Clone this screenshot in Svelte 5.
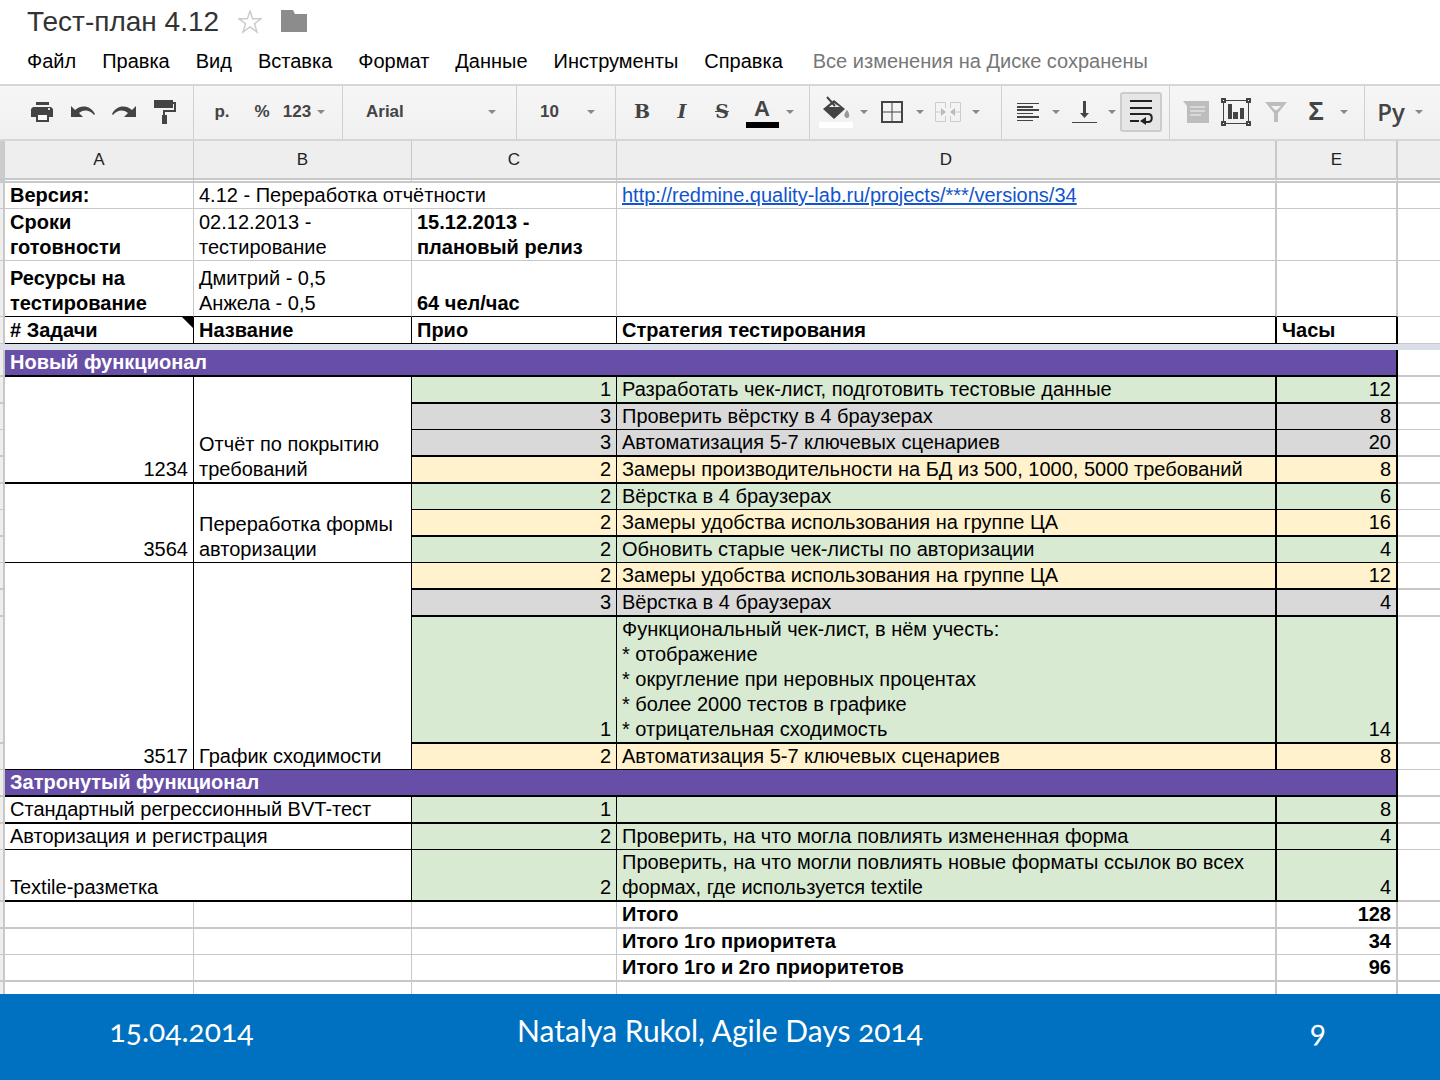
<script lang="ts">
type Tone = 'green' | 'grey' | 'yellow';

type Check = {
  prio: number;
  text: string;
  hours: number;
  tone: Tone;
  thin?: boolean;
};

type Task = { id: number; name: string; checks: Check[] };

const menus = ['Файл', 'Правка', 'Вид', 'Вставка', 'Формат', 'Данные', 'Инструменты', 'Справка'];

const tasks: Task[] = [
  {
    id: 1234,
    name: 'Отчёт по покрытию требований',
    checks: [
      { prio: 1, text: 'Разработать чек-лист, подготовить тестовые данные', hours: 12, tone: 'green' },
      { prio: 3, text: 'Проверить вёрстку в 4 браузерах', hours: 8, tone: 'grey', thin: true },
      { prio: 3, text: 'Автоматизация 5-7 ключевых сценариев', hours: 20, tone: 'grey' },
      { prio: 2, text: 'Замеры производительности на БД из 500, 1000, 5000 требований', hours: 8, tone: 'yellow' },
    ],
  },
  {
    id: 3564,
    name: 'Переработка формы авторизации',
    checks: [
      { prio: 2, text: 'Вёрстка в 4 браузерах', hours: 6, tone: 'green', thin: true },
      { prio: 2, text: 'Замеры удобства использования на группе ЦА', hours: 16, tone: 'yellow' },
      { prio: 2, text: 'Обновить старые чек-листы по авторизации', hours: 4, tone: 'green', thin: true },
    ],
  },
  {
    id: 3517,
    name: 'График сходимости',
    checks: [
      { prio: 2, text: 'Замеры удобства использования на группе ЦА', hours: 12, tone: 'yellow' },
      { prio: 3, text: 'Вёрстка в 4 браузерах', hours: 4, tone: 'grey' },
      {
        prio: 1,
        text: 'Функциональный чек-лист, в нём учесть:\n* отображение\n* округление при неровных процентах\n* более 2000 тестов в графике\n* отрицательная сходимость',
        hours: 14,
        tone: 'green',
      },
      { prio: 2, text: 'Автоматизация 5-7 ключевых сценариев', hours: 8, tone: 'yellow', thin: true },
    ],
  },
];

const affected = [
  { name: 'Стандартный регрессионный BVT-тест', prio: 1, text: '', hours: 8, thin: false },
  { name: 'Авторизация и регистрация', prio: 2, text: 'Проверить, на что могла повлиять измененная форма', hours: 4, thin: true },
  { name: 'Textile-разметка', prio: 2, text: 'Проверить, на что могли повлиять новые форматы ссылок во всех формах, где используется textile', hours: 4, thin: false },
];

const totals = [
  { label: 'Итого', value: 128, thin: false },
  { label: 'Итого 1го приоритета', value: 34, thin: true },
  { label: 'Итого 1го и 2го приоритетов', value: 96, thin: false },
];

let font = $state('Arial');
let size = $state('10');
let wrap = $state(true);
</script>

{#snippet arrow()}
  <svg class="arrow" width="8" height="4" viewBox="0 0 10 5" aria-hidden="true"><path d="M0 0h10L5 5z" /></svg>
{/snippet}

{#snippet drop(label: string)}
  <button class="drop" aria-label={label}>{@render arrow()}</button>
{/snippet}

<div class="page">
  <header>
    <div class="title">
      <h1>Тест-план 4.12</h1>
      <button class="plain" aria-label="Пометить">
        <svg width="24" height="24" viewBox="0 0 24 24" fill="none" stroke="#ccc" stroke-width="1.5">
          <path d="M12 1l2.600 7.700H23l-6.500 5L19 22l-7-5-7 5 2.500-8.300L1 8.700h8.400z" />
        </svg>
      </button>
      <button class="plain" aria-label="Папка">
        <svg width="26" height="24" viewBox="0 0 26 24" fill="#8c8c8c"><path d="M0 0h12l2 4h12v18H0z" /></svg>
      </button>
    </div>
    <nav>
      {#each menus as menu}
        <button class="plain">{menu}</button>
      {/each}
      <span class="saved">Все изменения на Диске сохранены</span>
    </nav>
  </header>

  <div class="toolbar" role="toolbar" aria-label="Панель инструментов">
    <div class="group history">
      <button class="tool" aria-label="Печать">
        <svg width="24" height="24" viewBox="0 0 24 24">
          <path d="M6 2h13v3H6zM3 7h18l2 2v8h-4v-4H6v4H1V9z" />
          <path d="M7 14h11v7H7z" fill="#fafafa" stroke="#444" stroke-width="2" />
          <path d="M18 8h2v2h-2z" fill="#ddd" />
        </svg>
      </button>
      <button class="tool" aria-label="Отменить">
        <svg width="24" height="24" viewBox="0 0 24 24"><path d="M0 6v11h12l-4-4c5-4 11-3 15 2l1-1C20 6 11 4 4 10z" /></svg>
      </button>
      <button class="tool" aria-label="Повторить">
        <svg width="24" height="24" viewBox="0 0 24 24"><path d="M24 6v11H12l4-4c-5-4-11-3-15 2l-1-1C4 6 13 4 20 10z" /></svg>
      </button>
      <button class="tool" aria-label="Копировать форматирование">
        <svg width="24" height="26" viewBox="0 0 24 26">
          <path d="M1 1h19v8H1zM9 16h5v9H9z" />
          <path d="M20 4h2v8H11v4" fill="none" stroke="#444" stroke-width="2" />
        </svg>
      </button>
    </div>

    <div class="group number">
      <button class="tool">р.</button>
      <button class="tool">%</button>
      <button class="tool format">123 {@render arrow()}</button>
    </div>

    <div class="group field">
      <select aria-label="Шрифт" bind:value={font}>
        <option>Arial</option>
        <option>Verdana</option>
      </select>
      {@render arrow()}
    </div>

    <div class="group field">
      <select aria-label="Размер шрифта" bind:value={size}>
        <option>10</option>
        <option>12</option>
      </select>
      {@render arrow()}
    </div>

    <div class="group">
      <button class="tool serif" aria-label="Полужирный">B</button>
      <button class="tool serif italic" aria-label="Курсив">I</button>
      <button class="tool serif strike" aria-label="Зачеркнутый">S</button>
      <button class="tool color" aria-label="Цвет текста">A</button>
      {@render drop('Выбрать цвет текста')}
    </div>

    <div class="group">
      <button class="tool" aria-label="Цвет заливки">
        <svg width="34" height="32" viewBox="0 0 34 32">
          <path d="M0 26h34v6H0z" fill="#fff" />
          <path d="M4 13L15 4l11 9-11 10z" />
          <path d="M10 11l5-4 6 4z" fill="#f4f4f4" />
          <path d="M8 1l8 9" stroke="#444" stroke-width="2" />
          <path d="M28 14c3 4 3 8 0 8s-4-4 0-8z" fill="#999" />
        </svg>
      </button>
      {@render drop('Выбрать цвет заливки')}
      <button class="tool" aria-label="Границы">
        <svg width="22" height="22" viewBox="0 0 22 22" fill="none" stroke="#444">
          <path d="M1 1h20v20H1z" stroke-width="2" />
          <path d="M11 1v20M1 11h20" />
        </svg>
      </button>
      {@render drop('Стиль границ')}
      <button class="tool" aria-label="Объединить ячейки" disabled>
        <svg width="28" height="22" viewBox="0 0 28 22" fill="none" stroke="#ccc" stroke-width="1">
          <path d="M11.500 7V1.500h-10v19h10V15M16.500 7V1.500h10v19h-10V15M2 11h8M26 11h-8" />
          <path d="M7 7l5 4-5 4zM21 7l-5 4 5 4z" fill="#bbb" stroke="none" />
        </svg>
      </button>
      {@render drop('Варианты объединения')}
    </div>

    <div class="group">
      <button class="tool" aria-label="Выравнивание по горизонтали">
        <svg width="22" height="20" viewBox="0 0 22 20">
          <path d="M0 1h22v1H0zM0 4h16v2H0zM0 7h22v2H0zM0 11h16v1H0zM0 14h22v2H0zM0 18h16v1H0z" />
        </svg>
      </button>
      {@render drop('Варианты выравнивания')}
      <button class="tool" aria-label="Выравнивание по вертикали">
        <svg width="25" height="24" viewBox="0 0 25 24">
          <path d="M11 1h3v12h3l-4.500 5L8 13h3zM0 22h25v1H0z" />
        </svg>
      </button>
      {@render drop('Варианты вертикального выравнивания')}
      <button class="tool" class:on={wrap} aria-pressed={wrap} aria-label="Перенос текста" onclick={() => (wrap = !wrap)}>
        <svg width="24" height="26" viewBox="0 0 24 26" fill="none" stroke="#222" stroke-width="2">
          <path d="M1 2h22M1 9h22M1 15h18c5 0 5 8 0 8h-4M1 22h9" />
          <path d="M17 18v8l-6-4z" fill="#222" stroke="none" />
        </svg>
      </button>
    </div>

    <div class="group">
      <button class="tool" aria-label="Комментарий" disabled>
        <svg width="26" height="24" viewBox="0 0 26 24">
          <path d="M0 1h26v22H4V6z" fill="#bdbdbd" />
          <path d="M7 7h15M7 11h15M7 15h11" stroke="#f4f4f4" stroke-width="1" />
        </svg>
      </button>
      <button class="tool" aria-label="Диаграмма">
        <svg width="30" height="28" viewBox="0 0 30 28">
          <path d="M2.500 2.500h25v23h-25z" fill="none" stroke="#444" />
          <path d="M7 6h4v15H7zM12 14h5v7h-5zM19 10h4v11h-4z" />
          <path d="M1 1h3v3H1zM26 1h3v3h-3zM1 24h3v3H1zM26 24h3v3h-3z" fill="#fff" stroke="#444" stroke-width="2" />
        </svg>
      </button>
      <button class="tool" aria-label="Фильтр">
        <svg width="22" height="20" viewBox="0 0 22 20" fill="#bdbdbd">
          <path d="M0 0h22l-9 11v9H9v-9z" />
          <path d="M6 4h10l-4 4h-2z" fill="#f4f4f4" />
        </svg>
      </button>
      <button class="tool sigma" aria-label="Функции">Σ</button>
      {@render drop('Список функций')}
    </div>

    <div class="group">
      <button class="tool lang" aria-label="Способ ввода">Ру</button>
      {@render drop('Выбрать способ ввода')}
    </div>
  </div>

  <table>
    <colgroup>
      <col class="col-head" />
      <col class="col-a" />
      <col class="col-b" />
      <col class="col-c" />
      <col />
      <col class="col-e" />
      <col class="col-f" />
    </colgroup>
    <thead>
      <tr>
        <td class="corner"></td>
        {#each ['A', 'B', 'C', 'D', 'E', ''] as letter}
          <th scope="col" class:wide={letter === 'D' || letter === 'E'}>{letter}</th>
        {/each}
      </tr>
    </thead>
    <tbody>
      <tr class="thin bold">
        <td></td>
        <td>Версия:</td>
        <td class="normal" colspan="2">4.12 - Переработка отчётности</td>
        <td class="normal wide">
          <a href="http://redmine.quality-lab.ru/projects/***/versions/34">http://redmine.quality-lab.ru/projects/***/versions/34</a>
        </td>
        <td class="wide"></td>
        <td></td>
      </tr>
      <tr class="thin bold dates">
        <td></td>
        <td>{'Сроки\nготовности'}</td>
        <td class="normal">02.12.2013 - тестирование</td>
        <td>15.12.2013 - плановый релиз</td>
        <td class="wide"></td>
        <td class="wide"></td>
        <td></td>
      </tr>
      <tr class="thin bold staff">
        <td></td>
        <td class="under">Ресурсы на тестирование</td>
        <td class="normal under">{'Дмитрий - 0,5\nАнжела - 0,5'}</td>
        <td class="under">64 чел/час</td>
        <td class="under wide"></td>
        <td class="under wide"></td>
        <td></td>
      </tr>
      <tr class="thin bold names">
        <td></td>
        <td class="ink note"># Задачи</td>
        <td class="ink">Название</td>
        <td class="ink">Прио</td>
        <td class="ink wide">Стратегия тестирования</td>
        <td class="ink wide">Часы</td>
        <td></td>
      </tr>
      <tr class="freeze"><td colspan="7"></td></tr>
    </tbody>

    <tbody>
      <tr>
        <td></td>
        <th class="section" colspan="5">Новый функционал</th>
        <td></td>
      </tr>
      {#each tasks as task}
        {#each task.checks as check, i}
          <tr class:thin={check.thin}>
            <td></td>
            {#if i === 0}
              <td class="ink num" class:fine={task.checks.at(-1)?.thin} rowspan={task.checks.length}>{task.id}</td>
              <td class="ink" class:fine={task.checks.at(-1)?.thin} rowspan={task.checks.length}>{task.name}</td>
            {/if}
            <td class="ink num {check.tone}">{check.prio}</td>
            <td class="ink wide {check.tone}">{check.text}</td>
            <td class="ink wide num {check.tone}">{check.hours}</td>
            <td></td>
          </tr>
        {/each}
      {/each}
      <tr>
        <td></td>
        <th class="section" colspan="5">Затронутый функционал</th>
        <td></td>
      </tr>
      {#each affected as item}
        <tr class:thin={item.thin}>
          <td></td>
          <td class="ink" colspan="2">{item.name}</td>
          <td class="ink num green">{item.prio}</td>
          <td class="ink wide green">{item.text}</td>
          <td class="ink wide num green">{item.hours}</td>
          <td></td>
        </tr>
      {/each}
      {#each totals as total}
        <tr class="bold" class:thin={total.thin}>
          <td></td>
          <td></td>
          <td></td>
          <td></td>
          <td class="wide">{total.label}</td>
          <td class="wide num">{total.value}</td>
          <td></td>
        </tr>
      {/each}
      <tr class="tail">
        <td></td>
        <td></td>
        <td></td>
        <td></td>
        <td class="wide"></td>
        <td class="wide"></td>
        <td></td>
      </tr>
    </tbody>
  </table>

  <footer>
    <span>15.04.2014</span>
    <span>Natalya Rukol, Agile Days 2014</span>
    <span class="number-mark">9</span>
  </footer>
</div>

<style>
  :global(body) {
    background: #fff;
  }

  .page {
    --line: #c8c8c8;
    display: flex;
    flex-direction: column;
    min-height: 100vh;
    font-family: 'Liberation Sans', Arial, sans-serif;
    font-size: 20px;
    line-height: 25px;
    color: #000;
  }
  button,
  select {
    font: inherit;
    color: inherit;
    background: none;
    border: none;
    padding: 0;
    cursor: pointer;
  }
  svg {
    display: block;
  }

  header {
    padding: 6px 27px 10px;
  }
  .title {
    display: flex;
    align-items: center;
    gap: 19px;
    height: 32px;
  }
  h1 {
    margin: 0;
    font-size: 28px;
    line-height: 32px;
    font-weight: normal;
    color: #333;
  }
  nav {
    display: flex;
    gap: 26px;
    padding-top: 11px;
  }
  .saved {
    margin-left: 4px;
    color: #777;
  }

  .toolbar {
    display: grid;
    grid-template-columns: 194px 149px 174px 99px 194px 192px 168px 195px 1fr;
    height: 53px;
    border-top: 2px solid #d6d6d6;
    border-bottom: 2px solid #d6d6d6;
    background: linear-gradient(#f6f6f6, #f0f0f0);
    color: #444;
    fill: #444;
  }
  .group {
    display: flex;
    align-items: center;
    padding: 0 0 2px 6px;
    border-right: 1px solid #d0d0d0;
  }
  .group:last-child {
    border-right: none;
  }
  .group.history {
    padding-left: 22px;
    gap: 1px;
  }
  .group.number {
    padding-left: 8px;
  }
  .tool {
    display: flex;
    align-items: center;
    justify-content: center;
    flex: none;
    box-sizing: border-box;
    width: 40px;
    height: 40px;
    font-size: 17px;
    font-weight: bold;
  }
  .tool.on {
    width: 42px;
    border: 2px solid #ccc;
    border-radius: 3px;
    background: #e6e6e6;
  }
  .tool.format {
    width: 44px;
    gap: 6px;
  }
  .tool.serif {
    font-family: 'DejaVu Serif', serif;
    font-size: 19px;
  }
  .tool.italic {
    font-style: italic;
  }
  .tool.strike {
    text-decoration: line-through;
  }
  .tool.color {
    flex-direction: column;
    gap: 2px;
    padding-top: 2px;
    font-size: 22px;
    line-height: 22px;
  }
  .tool.color::after {
    content: '';
    width: 33px;
    height: 6px;
    background: #000;
  }
  .tool.sigma {
    font-size: 26px;
  }
  .tool.lang {
    font-family: 'Open Sans', sans-serif;
    font-size: 24px;
    font-weight: 600;
  }
  .drop {
    display: flex;
    align-items: center;
    justify-content: center;
    width: 16px;
    height: 40px;
  }
  .arrow {
    flex: none;
    fill: #888;
  }
  .group.field {
    padding-left: 23px;
    padding-right: 20px;
  }
  .field select {
    flex: 1;
    min-width: 0;
    appearance: none;
    font-size: 17px;
    font-weight: bold;
  }

  table {
    width: 100%;
    table-layout: fixed;
    border-collapse: separate;
    border-spacing: 0;
  }
  .col-head {
    width: 5px;
  }
  .col-a {
    width: 189px;
  }
  .col-b {
    width: 218px;
  }
  .col-c {
    width: 205px;
  }
  .col-e {
    width: 121px;
  }
  .col-f {
    width: 42px;
  }
  thead th,
  thead td {
    box-sizing: border-box;
    height: 42px;
    padding: 0;
    border-right: 1px solid var(--line);
    border-bottom: 5px double var(--line);
    background: #eee;
    background-clip: padding-box;
    font-size: 17px;
    font-weight: normal;
    color: #222;
  }
  thead th.wide {
    border-right-width: 2px;
  }
  thead th:last-child {
    border-right: none;
  }
  thead .corner {
    background: #ccc;
  }

  tbody td,
  .section {
    position: relative;
    height: 25px;
    padding: 0 5px;
    border-right: 1px solid var(--line);
    border-bottom: 2px solid var(--line);
    text-align: left;
    vertical-align: bottom;
    white-space: pre-line;
  }
  tbody td:first-child {
    padding: 0;
    border-right: 2px solid var(--line);
    background: #eee;
  }
  tbody td:last-child {
    border-right: none;
  }
  .thin td,
  tbody td.fine {
    border-bottom-width: 1px;
  }
  tbody td.wide {
    border-right-width: 2px;
  }
  tbody td.under {
    border-bottom-color: #000;
  }
  tbody td.ink {
    border-color: #000;
  }
  .bold {
    font-weight: bold;
  }
  .normal {
    font-weight: normal;
  }
  tbody td.num {
    text-align: right;
  }
  .dates td {
    height: 51px;
  }
  .staff td {
    height: 55px;
  }
  .names td {
    height: 26px;
  }
  .note::after {
    content: '';
    position: absolute;
    top: 0;
    right: 0;
    border-top: 11px solid #000;
    border-left: 11px solid transparent;
  }
  tbody .freeze td {
    height: 6px;
    border: none;
    background: #dadee8;
  }
  .section {
    border-color: #000;
    border-right-width: 2px;
    background: #674ea7;
    color: #fff;
  }
  .green {
    background: #d9ead3;
  }
  .grey {
    background: #d9d9d9;
  }
  .yellow {
    background: #fff2cc;
  }
  a {
    color: #1155cc;
  }
  .tail td {
    height: 12px;
    border-bottom: none;
  }

  footer {
    flex: 1;
    display: grid;
    grid-template-columns: 1fr 2fr 1fr;
    align-items: center;
    padding: 0 2px 14px;
    min-height: 72px;
    background: #0070c0;
    color: #fff;
    font-family: Lato, sans-serif;
    font-size: 30px;
    line-height: 36px;
    font-variant-numeric: oldstyle-nums;
    text-align: center;
  }
  .number-mark {
    padding-right: 112px;
    text-align: right;
  }
</style>
